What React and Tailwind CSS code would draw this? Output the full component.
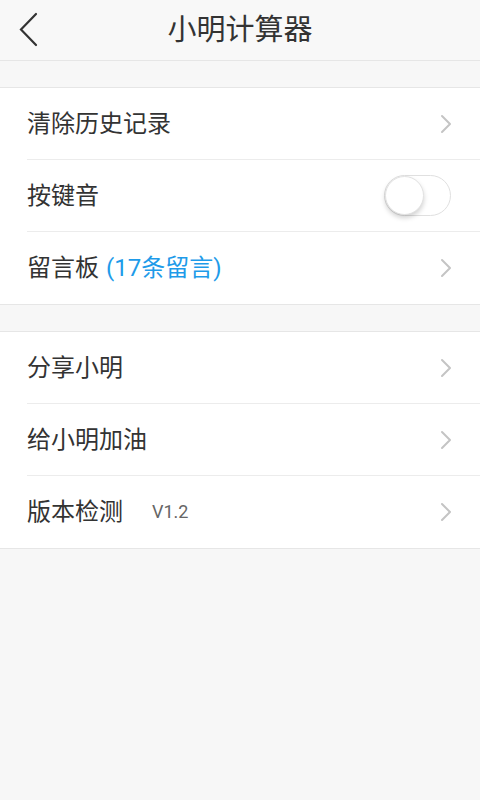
import React from "react";

const Chevron = () => (
  <svg width="12" height="20" viewBox="0 0 12 20" className="shrink-0">
    <path d="M2 2 L10 10 L2 18" fill="none" stroke="#c4c4c4" strokeWidth="2" strokeLinecap="round" strokeLinejoin="round" />
  </svg>
);

const Row = ({ children, right, last }) => (
  <div className="pl-[27px]">
    <div className={`h-[72px] flex items-center justify-between pr-[28px] ${last ? "" : "border-b border-[#ececec]"}`}>
      <div className="flex items-center text-[24px] text-[#333] leading-none">{children}</div>
      {right}
    </div>
  </div>
);

export default function App() {
  return (
    <div
      className="w-[480px] h-[800px] bg-[#f7f7f7] flex flex-col"
      style={{ fontFamily: 'Roboto, "Noto Sans CJK SC", "Noto Sans", sans-serif' }}
    >
      <div className="h-[61px] border-b border-[#e6e6e6] bg-[#f8f8f8] grid grid-cols-[80px_1fr_80px] items-center">
        <div className="pl-[18px] flex items-center">
          <svg width="22" height="36" viewBox="0 0 22 36">
            <path d="M18 2 L3 17.5 L18 33" fill="none" stroke="#333" strokeWidth="2.2" strokeLinecap="round" strokeLinejoin="miter" />
          </svg>
        </div>
        <div className="text-center text-[29px] text-[#333] leading-none">小明计算器</div>
        <div />
      </div>

      <div className="h-[26px]" />

      <div className="bg-white border-y border-[#e6e6e6]">
        <Row right={<Chevron />}>清除历史记录</Row>
        <Row
          right={
            <div className="relative w-[67px] h-[41px] rounded-full border border-[#e0e0e0] bg-white mr-[1px]">
              <div className="absolute left-0 top-0 w-[39px] h-[39px] rounded-full bg-white border border-[#e2e2e2] shadow-[0_3px_5px_rgba(0,0,0,0.18)]" />
            </div>
          }
        >
          按键音
        </Row>
        <Row right={<Chevron />} last>
          留言板<span className="ml-[7px] text-[#1e9be9]">(17条留言)</span>
        </Row>
      </div>

      <div className="h-[26px]" />

      <div className="bg-white border-y border-[#e6e6e6]">
        <Row right={<Chevron />}>分享小明</Row>
        <Row right={<Chevron />}>给小明加油</Row>
        <Row right={<Chevron />} last>
          版本检测<span className="ml-[29px] text-[18px] text-[#666]">V1.2</span>
        </Row>
      </div>
    </div>
  );
}
